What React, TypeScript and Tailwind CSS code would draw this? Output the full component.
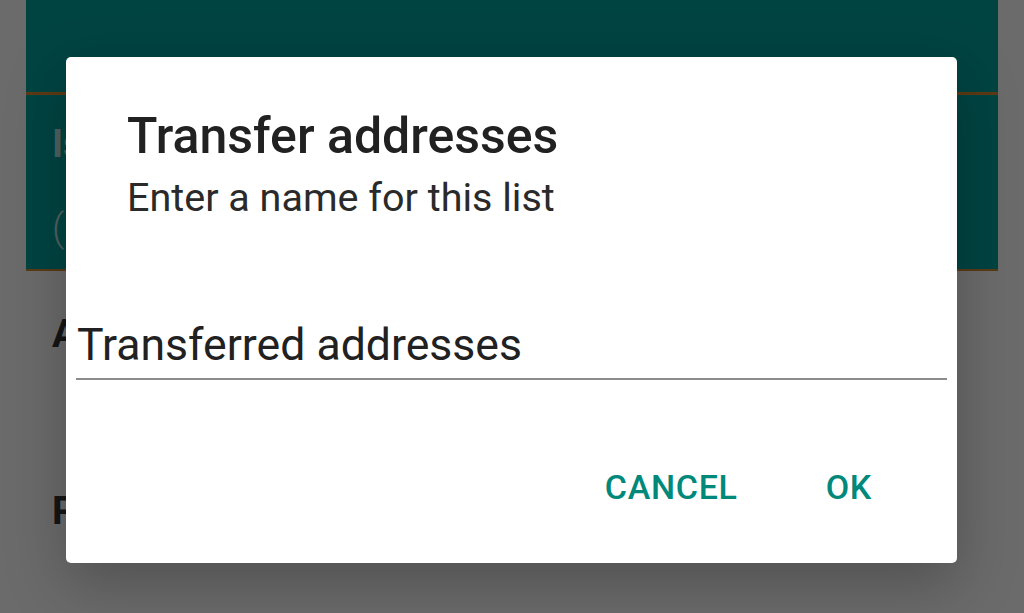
import React from "react";

const font = { fontFamily: "Roboto, 'Noto Sans', sans-serif" };

function Backdrop() {
  // the screen sitting under the dialog
  return (
    <div className="h-[613px] w-[1024px] overflow-hidden bg-white">
      <div className="mx-[26px] flex flex-col">
        <div className="h-[95px] border-b-[3px] border-[#d98a34] bg-[#00a29e]" />
        <div className="flex h-[176px] flex-col border-b-[2px] border-[#d98a34] bg-[#00a29e] px-[26px] pt-[30px]">
          <div className="text-[38px] font-bold leading-none text-[#bfe6e4]">Istanbul office</div>
          <div className="mt-[46px] text-[38px] font-light leading-none text-[#bfe6e4]">(12 addresses)</div>
        </div>
        <div className="px-[26px] pt-[44px] text-[39px] font-bold leading-none text-[#333333]">Addresses</div>
        <div className="px-[26px] pt-[138px] text-[39px] font-bold leading-none text-[#333333]">Preferences</div>
      </div>
    </div>
  );
}

export default function App() {
  return (
    <div className="relative h-[613px] w-[1024px] overflow-hidden" style={font}>
      <Backdrop />

      {/* scrim + dialog */}
      <div className="absolute inset-0 bg-[rgba(0,0,0,0.58)]">
        <div className="absolute left-[66px] top-[57px] flex h-[506px] w-[891px] flex-col rounded-[5px] bg-white shadow-[0_20px_60px_rgba(0,0,0,0.25)]">
          <div className="pl-[61px] pt-[54px]">
            <h2 className="text-[50px] font-medium leading-none text-[#212121]">Transfer addresses</h2>
            <p className="mt-[17px] text-[39.5px] leading-none text-[#2a2a2a]">Enter a name for this list</p>
          </div>

          <div className="mx-[10px] mt-[105px] border-b-2 border-[#8c8c8c] pb-[11px]">
            <div className="pl-[1px] text-[44.6px] leading-none text-[#212121]">Transferred addresses</div>
          </div>

          <div className="mt-[90px] flex justify-end gap-[88px] pr-[85px]">
            <button className="text-[34px] font-medium leading-none tracking-[0.7px] text-[#00897b]">CANCEL</button>
            <button className="text-[34px] font-medium leading-none tracking-[0.7px] text-[#00897b]">OK</button>
          </div>
        </div>
      </div>
    </div>
  );
}
